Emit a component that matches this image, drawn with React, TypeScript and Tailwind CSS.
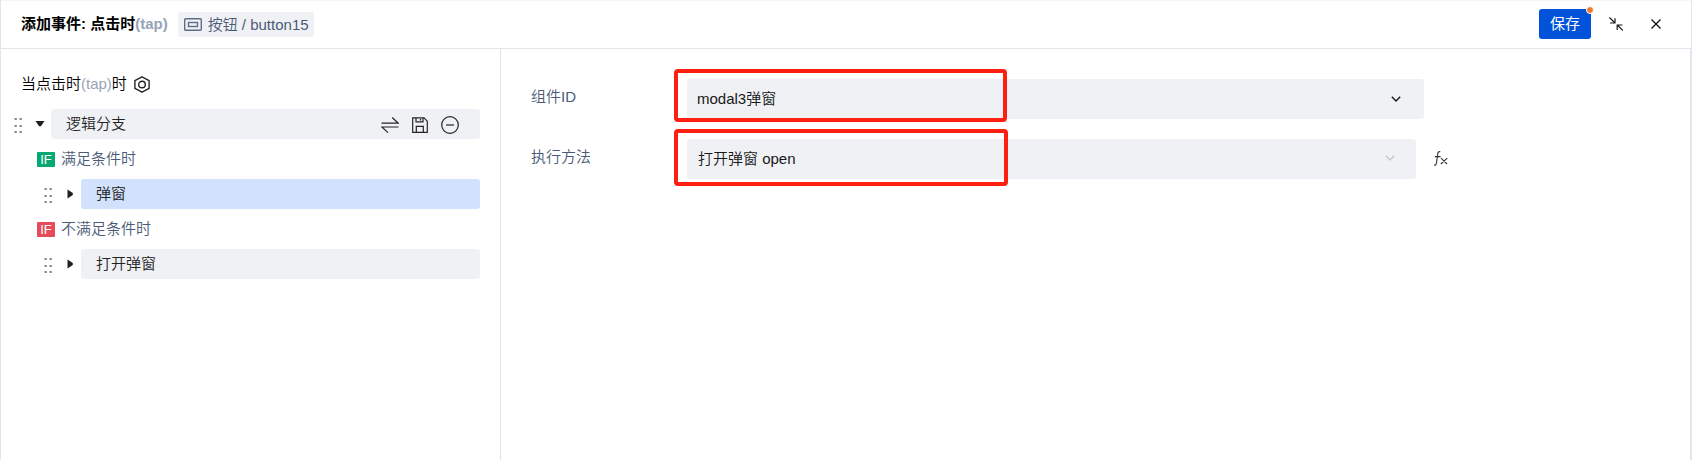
import React from "react";

function Grip() {
  return (
    <svg className="mt-[3px] h-4 w-2 shrink-0" viewBox="0 0 8 16" fill="#85878c">
      {[1, 8, 14].map((y) =>
        [0.5, 5.5].map((x) => <rect key={`${x}-${y}`} x={x} y={y - 1} width="2.4" height="2" rx="0.4" />),
      )}
    </svg>
  );
}

function Caret({ open = false }: { open?: boolean }) {
  return (
    <svg className="h-[10px] w-[10px] shrink-0" viewBox="0 0 10 10" fill="#1f1f1f">
      {open ? <path d="M0.5 2h9L5.9 7.3h-1.8z" /> : <path d="M2.5 0.5v9L7.8 5.9v-1.8z" />}
    </svg>
  );
}

function Condition({ color, text }: { color: string; text: string }) {
  return (
    <div className="flex h-[30px] items-center pl-9">
      <span className={`flex h-[15px] w-[18px] items-center justify-center rounded-[1px] text-[13px] leading-none text-white ${color}`}>
        IF
      </span>
      <span className="-mt-0.5 ml-[6px] leading-none text-[#4b5b76]">{text}</span>
    </div>
  );
}

function Action({ text, active = false }: { text: string; active?: boolean }) {
  return (
    <div className="flex h-[30px] items-center pl-[43px]">
      <Grip />
      <span className="ml-[13px] flex">
        <Caret />
      </span>
      <div className={`ml-[6px] flex h-[30px] flex-1 items-center rounded-[3px] pb-0.5 pl-[15px] leading-none ${active ? "bg-[#d3e2fc]" : "bg-[#f0f1f5]"}`}>
        {text}
      </div>
    </div>
  );
}

function Header() {
  return (
    <header className="flex h-[49px] shrink-0 items-center border-t border-b border-t-[#f4f5f7] border-b-[#e2e5ec] pl-5">
      <h1 className="pb-0.5 font-bold leading-none whitespace-pre text-black">
        添加事件: 点击时<span className="font-bold text-[#97a3b7]">(tap)</span>
      </h1>
      <div className="ml-[10px] flex h-[25px] w-[136px] items-center rounded-[3px] bg-[#f0f1f5] pl-[6px] text-[#4b5b76]">
        <svg className="h-[13px] w-[18px]" viewBox="0 0 18 13" fill="none" stroke="#5f6e88" strokeWidth="1.4">
          <rect x="0.7" y="0.7" width="16.6" height="11.6" rx="1" />
          <rect x="4.5" y="4.5" width="9" height="4" />
        </svg>
        <span className="ml-[6px] leading-none whitespace-nowrap">按钮 / button15</span>
      </div>
      <div className="ml-auto flex items-center pr-[30px] pb-[2px]">
        <button className="relative h-[30px] w-[52px] rounded-[3px] bg-[#0052d9] leading-none font-normal text-white">
          保存
          <span className="absolute -top-[3px] -right-[3px] h-[8px] w-[8px] rounded-full border border-white bg-[#ed7b2f]" />
        </button>
        <svg className="ml-[18px] h-[14px] w-[14px]" viewBox="0 0 14 14" fill="none" stroke="#181818" strokeWidth="1.2">
          <path d="M0.3 0.5 5.8 5.8M6 1.2V6H1M14 13.5 8.5 8.3M8.2 13V8H13.4" />
        </svg>
        <svg className="ml-7 h-[10px] w-[10px]" viewBox="0 0 10 10" fill="none" stroke="#181818" strokeWidth="1.4">
          <path d="M0.5 0.5l9 9M9.5 0.5l-9 9" />
        </svg>
      </div>
    </header>
  );
}

function Sidebar() {
  return (
    <aside className="w-[500px] shrink-0 border-r border-[#e0e3ea] pr-5">
      <div className="flex h-[60px] items-center pt-[10px] pl-5">
        <span className="-mt-0.5 leading-none text-black">
          当点击时<span className="text-[#97a3b7]">(tap)</span>时
        </span>
        <svg className="ml-[6px] h-[17px] w-[18px]" viewBox="0 0 18 17" fill="none" stroke="#242424" strokeWidth="1.4">
          <path d="M9 0.8 16.1 4.6v7.8L9 16.2 1.9 12.4V4.6z" strokeLinejoin="round" />
          <circle cx="9" cy="8.5" r="3.3" />
        </svg>
      </div>
      <div className="flex flex-col gap-[5px]">
        <div className="flex h-[30px] items-center pl-[13px]">
          <Grip />
          <span className="ml-[13px] flex">
            <Caret open />
          </span>
          <div className="ml-[6px] flex h-[30px] flex-1 items-center rounded-[3px] bg-[#f0f1f5] pr-[21px] pl-[15px]">
            <span className="-mt-0.5 leading-none">逻辑分支</span>
            <div className="ml-auto flex items-center gap-3 pt-0.5">
              <svg className="h-[18px] w-[18px]" viewBox="0 0 18 18" fill="none" stroke="#242424" strokeWidth="1.2">
                <path d="M0.5 7.2H17.3L11.2 1.5M17.5 11H0.9L7 16.6" />
              </svg>
              <svg className="h-[18px] w-[18px]" viewBox="0 0 18 18" fill="none" stroke="#242424" strokeWidth="1.2">
                <path d="M1.7 1.9H13L16.3 5.2V16.3H1.7zM5 1.9v4h7v-4M5.3 16.3v-6h7v6M9.5 3v1.6" />
              </svg>
              <svg className="h-[18px] w-[18px]" viewBox="0 0 18 18" fill="none" stroke="#242424" strokeWidth="1.2">
                <circle cx="9" cy="9" r="8.3" />
                <path d="M5 9h8" />
              </svg>
            </div>
          </div>
        </div>
        <Condition color="bg-[#07a872]" text="满足条件时" />
        <Action text="弹窗" active />
        <Condition color="bg-[#e54b58]" text="不满足条件时" />
        <Action text="打开弹窗" />
      </div>
    </aside>
  );
}

function Chevron({ color }: { color: string }) {
  return (
    <svg className={`h-[6px] w-[10px] ${color}`} viewBox="0 0 10 6" fill="none" stroke="currentColor" strokeWidth="1.4">
      <path d="M0.8 0.8 5 5 9.2 0.8" />
    </svg>
  );
}

function Form() {
  return (
    <section className="flex flex-1 flex-col gap-5 pt-[30px] pl-[30px]">
      <div className="flex h-10">
        <label className="w-[156px] pt-[10px] leading-none text-[#4b5b76]">组件ID</label>
        <div className="relative flex h-10 w-[737px] items-center justify-between rounded-[3px] bg-[#f0f1f5] pr-[23px] pl-[10px]">
          <span className="-mt-0.5 leading-none text-[#181818]">modal3弹窗</span>
          <Chevron color="text-[#181818]" />
          <div className="absolute -top-[10px] -left-[13px] h-[53px] w-[333px] rounded-[4px] border-4 border-[#ff1f10]" />
        </div>
      </div>
      <div className="flex h-10">
        <label className="w-[156px] pt-[10px] leading-none text-[#4b5b76]">执行方法</label>
        <div className="relative flex h-10 w-[729px] items-center justify-between rounded-[3px] bg-[#f0f1f5] pr-[21px] pl-[11px]">
          <span className="-mt-0.5 leading-none text-[#181818]">打开弹窗 open</span>
          <span className="-mt-0.5 flex">
            <Chevron color="text-[#c5c7cc]" />
          </span>
          <div className="absolute -top-[10px] -left-[13px] h-[57px] w-[334px] rounded-[4px] border-4 border-[#ff1f10]" />
        </div>
        <svg className="mt-3 ml-[18px] h-[15px] w-[14px]" viewBox="0 0 14 15" fill="none" stroke="#30343c" strokeWidth="1.1">
          <path d="M6.3 0.8C4.6 0.3 4 1.2 3.8 2.6L2.5 11.8C2.3 13.6 1.5 14.5 0 14M1 5.6h5.6M7 7.2l6 5.8M13.3 7.2 6.8 13" />
        </svg>
      </div>
    </section>
  );
}

export default function App() {
  return (
    <div className="flex h-[460px] w-[1692px] flex-col overflow-hidden border-l border-r border-[#e2e5ec] bg-white font-['Liberation_Sans','Noto_Sans_CJK_SC',sans-serif] text-[15px] font-[350] text-[#242424]">
      <Header />
      <main className="flex flex-1 border-r border-[#e2e5ec]">
        <Sidebar />
        <Form />
      </main>
    </div>
  );
}
